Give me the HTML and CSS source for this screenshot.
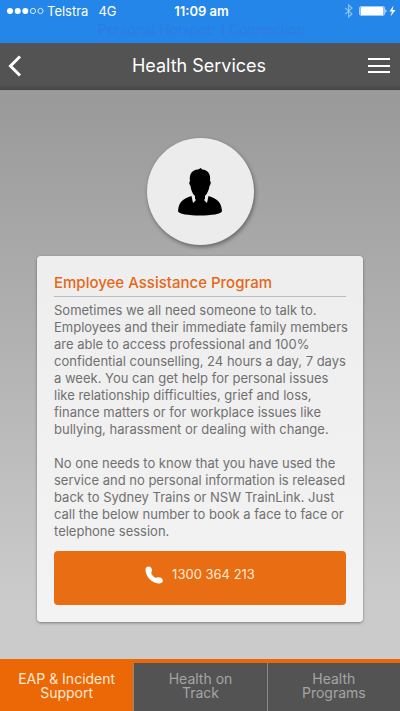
FILE: index.html
```html
<!DOCTYPE html>
<html lang="en">
<head>
<meta charset="utf-8">
<meta name="viewport" content="width=device-width, initial-scale=1">
<title>Health Services</title>
<link rel="stylesheet" href="styles.css">
</head>
<body>
<div class="status">
  <div class="status-row">
    <div class="carrier">
      <svg class="signal" width="37" height="8" viewBox="0 0 37 8" aria-hidden="true">
        <g fill="#fff"><circle cx="3" cy="4" r="3"/><circle cx="10.7" cy="4" r="3"/><circle cx="18.3" cy="4" r="3"/></g>
        <g fill="none" stroke="#fff" stroke-width=".8"><circle cx="26" cy="4" r="2.6"/><circle cx="33.5" cy="4" r="2.6"/></g>
      </svg>
      <span>Telstra</span>
      <span class="network">4G</span>
    </div>
    <div class="time">11:09 am</div>
    <div class="power">
      <svg width="10" height="14" viewBox="0 0 10 14" fill="none" stroke="#8fc4f5" stroke-width="1.1" aria-hidden="true"><path d="M1.2 3.8 8 10 4.6 13V1L8 4 1.2 10.2"/></svg>
      <svg width="37" height="12" viewBox="0 0 37 12" aria-hidden="true">
        <rect x=".5" y="1.5" width="25" height="9" rx="1.5" fill="none" stroke="#9ccbf8"/>
        <rect x="1.5" y="2" width="23" height="8" rx="1" fill="#fff"/>
        <path d="M26.5 4q2 2 0 4z" fill="#fff"/>
        <path d="M34.500 .5 30.5 6.500H33L31.5 11.500 36.500 5H33.600z" fill="#fff"/>
      </svg>
    </div>
  </div>
  <div class="hotspot">Personal Hotspot: 1 Connection</div>
</div>
<header class="navbar">
  <button class="icon-button" type="button" aria-label="Back">
    <svg width="14" height="22" viewBox="0 0 14 22" fill="none" stroke="#fff" stroke-width="3"><path d="M12 1.5 2.5 11 12 20.5"/></svg>
  </button>
  <h1 class="title">Health Services</h1>
  <button class="icon-button icon-end" type="button" aria-label="Menu">
    <svg width="22" height="16" viewBox="0 0 22 16" fill="#fff"><path d="M0 0h22v2H0zM0 7h22v2H0zM0 13h22v2H0z"/></svg>
  </button>
</header>
<main class="content">
  <div class="avatar">
    <svg width="46" height="50" viewBox="0 0 46 50" aria-hidden="true">
      <path d="M13 14C12 7 15 3 21 2.500L24 1 25 2.500C31 3 34 7 33 14C34.500 15 33.500 18 32.500 19C32 23 30 27 28 29V32L23 36 18 32V29C15.500 27 14 23 13.500 19C12 17 11.800 15 13 14Z"/>
      <path d="M14.500 29C6 32 2 34 1 44C1 50 45 50 45 44C44 34 40 32 31.500 29L30 36 26 32H20L16 36Z"/>
    </svg>
  </div>
  <section class="card">
    <h2 class="card-title">Employee Assistance Program</h2>
    <p class="text">Sometimes we all need someone to talk to. Employees and their immediate family members are able to access professional and 100% confidential counselling, 24 hours a day, 7 days a week. You can get help for personal issues like relationship difficulties, grief and loss, finance matters or for workplace issues like bullying, harassment or dealing with change.</p>
    <p class="text">No one needs to know that you have used the service and no personal information is released back to Sydney Trains or NSW TrainLink. Just call the below number to book a face to face or telephone session.</p>
    <a class="call" href="tel:1300364213">
      <svg width="18" height="18" viewBox="0 0 18 18" fill="#fff" aria-hidden="true"><path d="M.5 4C.3 2 1.500.4 3.500.4C5.500.4 7 2 7 4C7 5.500 6.300 6 6.300 7C6.800 9 8.500 10.800 10.500 11.800C11.500 12 12 11.300 13.500 11.300C16 11.300 17.800 12.800 17.800 14.800C17.800 16.800 15.500 17.700 13.500 17.500C6.500 17 .8 10.500.5 4Z"/></svg>
      <span>1300 364 213</span>
    </a>
  </section>
</main>
<nav class="tabs">
  <a class="tab active" href="#eap" aria-current="page">EAP &amp; Incident Support</a>
  <a class="tab" href="#track">Health on<br>Track</a>
  <a class="tab" href="#programs">Health<br>Programs</a>
</nav>
</body>
</html>
```
FILE: styles.css
```css
* { box-sizing: border-box; }

body {
  margin: 0;
  min-height: 100vh;
  display: flex;
  flex-direction: column;
  font-family: Inter, "Liberation Sans", sans-serif;
  font-size: 13px;
  line-height: 17px;
  color: #707070;
}

h1, h2, p { margin: 0; }

.status {
  background: #2386e8;
  color: #fff;
  padding: 2px 4px 4px 7px;
}

.status-row {
  display: grid;
  grid-template-columns: 1fr auto 1fr;
  align-items: center;
  height: 18px;
}

.carrier, .power { display: flex; align-items: center; }
.carrier { gap: 3px; }
.network { margin-left: 7px; }
.time { font-weight: 600; }
.power { justify-content: flex-end; gap: 5px; }

.hotspot {
  text-align: center;
  font-size: 14px;
  line-height: 19px;
  color: #2f7ce0;
}

.navbar {
  display: grid;
  grid-template-columns: 1fr auto 1fr;
  align-items: center;
  height: 47px;
  padding: 0 10px 0 8px;
  background: #535353;
  border-bottom: 1px solid #444;
  box-shadow: inset 0 -3px 0 #4b4b4b;
  color: #fff;
}

.title { font-size: 18px; line-height: 24px; font-weight: 400; }

.icon-button {
  display: flex;
  padding: 0;
  border: 0;
  background: none;
  cursor: pointer;
}

.icon-end { justify-self: end; }

.content {
  flex: 1;
  padding: 48px 37px 36px;
  background: linear-gradient(#999, #cbcbcb 90%);
}

.avatar {
  display: flex;
  align-items: center;
  justify-content: center;
  width: 107px;
  height: 107px;
  margin: 0 auto 11px;
  border-radius: 50%;
  background: #ececec;
  box-shadow: 1px 2px 4px rgba(0, 0, 0, .4);
}

.card {
  padding: 17px;
  border-radius: 4px;
  background: linear-gradient(#eee, #f3f3f3);
  box-shadow: 0 1px 3px rgba(0, 0, 0, .4);
}

.card-title {
  padding-bottom: 3px;
  margin-bottom: 5px;
  border-bottom: 1px solid #bbb;
  font-size: 15px;
  line-height: 20px;
  font-weight: 500;
  color: #e56717;
}

.text { margin-right: -4px; }
.text + .text { margin-top: 17px; }

.call {
  display: flex;
  justify-content: center;
  gap: 9px;
  height: 54px;
  margin-top: 11px;
  padding-top: 15px;
  border-radius: 4px;
  background: #e96d12;
  color: #fdebd3;
  text-decoration: none;
}

.tabs {
  display: grid;
  grid-template-columns: repeat(3, 1fr);
  border-top: 4px solid #ec6706;
  background: #535353;
}

.tab {
  height: 48px;
  padding: 9px 12px 0;
  border-left: 1px solid #8a8a8a;
  color: #a5a5a5;
  font-size: 14px;
  line-height: 14px;
  text-align: center;
  text-decoration: none;
}

.tab.active {
  border-left: 0;
  background: #ec6706;
  color: #fdebd3;
}
```
